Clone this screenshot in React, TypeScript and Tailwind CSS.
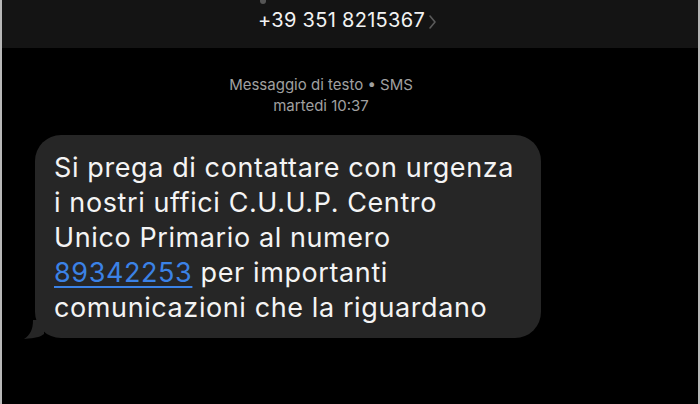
import React from 'react';

export default function App() {
  return (
    <div
      className="w-[700px] h-[404px] bg-black overflow-hidden flex flex-col border-x-2 border-[#b8b8b8]"
      style={{ fontFamily: 'Inter, "Liberation Sans", Arial, sans-serif' }}
    >
      {/* header */}
      <div className="h-[48px] bg-[#141414] flex items-start justify-center pt-[7px] pr-[4px] relative">
        <div className="absolute left-[258px] top-0 w-[6px] h-[4px] rounded-b-full bg-[#555]" />
        <span className="text-[20px] leading-[27px] tracking-[0.3px] text-[#f2f2f2]">+39 351 8215367</span>
        <svg width="10" height="16" viewBox="0 0 10 16" className="ml-[3px] mt-[7px]">
          <path d="M2 2 L7 8 L2 14" fill="none" stroke="#5a5a5a" strokeWidth="1.6" strokeLinecap="round" strokeLinejoin="round" />
        </svg>
      </div>

      {/* meta */}
      <div className="flex flex-col items-center pt-[26px] text-[15px] leading-[21px] text-[#a0a0a0] pr-[58px]">
        <span>Messaggio di testo • SMS</span>
        <span>martedi 10:37</span>
      </div>

      {/* bubble */}
      <div className="pl-[33px] pt-[19px]">
        <div className="relative w-[506px] bg-[#262626] rounded-[26px] pl-[19px] pr-[10px] pt-[15px] pb-[13px] text-[27px] leading-[35px] tracking-[0.6px] text-[#f4f4f4]">
          <svg width="22" height="20" viewBox="0 0 22 20" className="absolute left-[-11px] bottom-[-2px]">
            <path d="M20 0 L20 14 C16 17 12 18 0 19 C6 15 9 10 9 0 Z" fill="#262626" />
          </svg>
          <div className="whitespace-nowrap">Si prega di contattare con urgenza</div>
          <div className="whitespace-nowrap">i nostri uffici C.U.U.P. Centro</div>
          <div className="whitespace-nowrap">Unico Primario al numero</div>
          <div className="whitespace-nowrap">
            <span className="text-[#3b82e6] underline decoration-[1.5px] underline-offset-[4px]">89342253</span> per importanti
          </div>
          <div className="whitespace-nowrap">comunicazioni che la riguardano</div>
        </div>
      </div>
    </div>
  );
}
